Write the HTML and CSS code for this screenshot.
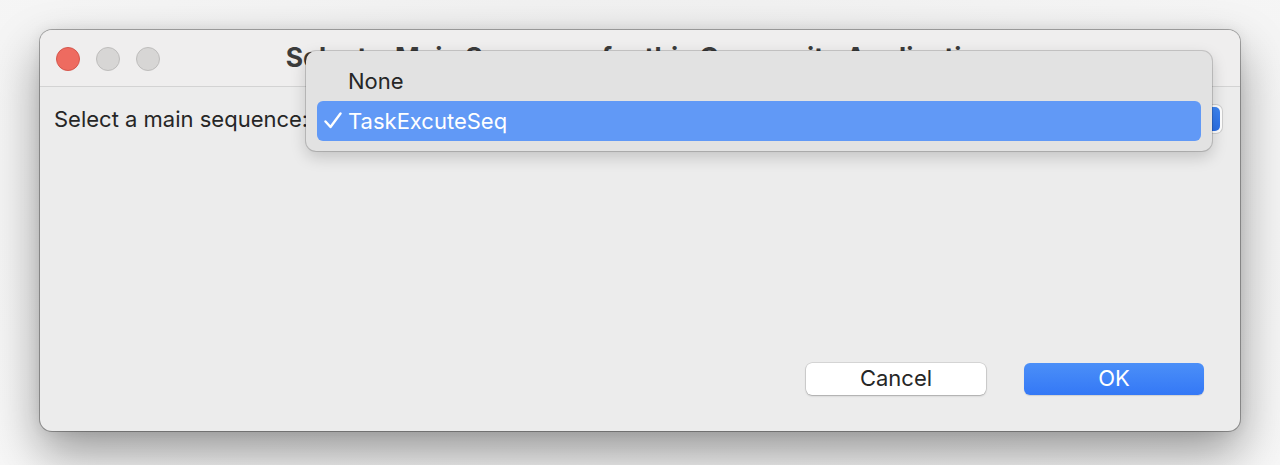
FILE: index.html
```html
<!DOCTYPE html>
<html>
<head>
<meta charset="utf-8">
<link rel="stylesheet" href="styles.css">
</head>
<body>
<div class="window">
  <div class="titlebar">
    <div class="lights">
      <span class="light red"></span>
      <span class="light gray"></span>
      <span class="light gray"></span>
    </div>
    <div class="title">Select a Main Sequence for this Composite Application</div>
  </div>
  <div class="content">
    <div class="row">
      <span class="label">Select a main sequence:</span>
      <div class="popup"><span class="popup-arrow"></span></div>
    </div>
    <div class="buttons">
      <button class="btn cancel">Cancel</button>
      <button class="btn ok">OK</button>
    </div>
  </div>
  <div class="menu">
    <div class="item">None</div>
    <div class="item selected"><svg class="check" width="18" height="17" viewBox="0 0 18 17"><path d="M1.5 9.5 L6.5 15 L16.5 1.5" fill="none" stroke="#fff" stroke-width="2.4" stroke-linecap="round" stroke-linejoin="round"/></svg>TaskExcuteSeq</div>
  </div>
</div>
</body>
</html>
```
FILE: styles.css
```css
html, body {
  margin: 0;
  padding: 0;
}
body {
  width: 1280px;
  height: 465px;
  overflow: hidden;
  background: radial-gradient(ellipse at 50% 40%, #e9e9e9 0%, #f3f3f3 60%, #f7f7f7 100%);
  font-family: Inter, "Liberation Sans", sans-serif;
  color: #262626;
  padding-top: 30px;
  padding-left: 40px;
  box-sizing: border-box;
}
.window {
  position: relative;
  width: 1200px;
  height: 401px;
  border-radius: 12px;
  background: #ececec;
  box-shadow: 0 0 0 1px rgba(0,0,0,0.3), 0 22px 48px rgba(0,0,0,0.38), 0 0 14px rgba(0,0,0,0.08);
  display: flex;
  flex-direction: column;
}
.titlebar {
  height: 56px;
  border-bottom: 1px solid #d3d3d3;
  background: #efeeee;
  border-radius: 12px 12px 0 0;
  display: flex;
  align-items: center;
  position: relative;
}
.lights {
  display: flex;
  gap: 16px;
  padding-left: 16px;
  padding-top: 2px;
}
.light {
  width: 24px;
  height: 24px;
  border-radius: 50%;
  box-sizing: border-box;
}
.red {
  background: #ee6b60;
  border: 1px solid #d5564c;
}
.gray {
  background: #d7d6d5;
  border: 1px solid #bebdbc;
}
.title {
  position: absolute;
  left: 0;
  right: 0;
  top: 11px;
  text-align: center;
  font-weight: 700;
  font-size: 26.5px;
  color: #3c3c3c;
  white-space: nowrap;
}
.content {
  flex: 1;
  display: flex;
  flex-direction: column;
  justify-content: space-between;
  padding: 13px 18px 36px 14px;
}
.row {
  display: flex;
  align-items: center;
  gap: 6px;
  height: 38px;
}
.label {
  font-size: 22px;
  white-space: nowrap;
}
.popup {
  flex: 1;
  height: 28px;
  border-radius: 6px;
  background: #fff;
  box-shadow: 0 0 0 1px rgba(0,0,0,0.12);
  display: flex;
  justify-content: flex-end;
}
.popup-arrow {
  width: 22px;
  height: 24px;
  margin: 2px;
  border-radius: 5px;
  background: linear-gradient(#3d86f5, #2a6fe6);
}
.buttons {
  display: flex;
  justify-content: flex-end;
  gap: 38px;
  padding-right: 18px;
}
.btn {
  width: 180px;
  height: 32px;
  border: none;
  border-radius: 6px;
  font-family: Inter, "Liberation Sans", sans-serif;
  font-size: 22px;
  line-height: 30px;
  padding: 0 0 2px;
}
.cancel {
  background: #fff;
  color: #262626;
  box-shadow: 0 0 0 0.5px rgba(0,0,0,0.18), 0 1px 2px rgba(0,0,0,0.22);
}
.ok {
  background: linear-gradient(#4b8ff8, #3478f6);
  color: #fff;
  box-shadow: 0 1px 1px rgba(0,0,0,0.12);
}
.menu {
  position: absolute;
  left: 266px;
  top: 21px;
  width: 906px;
  height: 100px;
  box-sizing: border-box;
  padding: 10px 11px;
  background: #e2e2e2;
  border-radius: 10px;
  box-shadow: 0 0 0 1px rgba(0,0,0,0.16), 0 6px 16px rgba(0,0,0,0.18);
}
.item {
  height: 40px;
  display: flex;
  align-items: center;
  padding-left: 31px;
  font-size: 22px;
  color: #262626;
  position: relative;
  border-radius: 6px;
}
.item.selected {
  background: #6199f6;
  color: #fff;
}
.check {
  position: absolute;
  left: 7px;
  top: 11px;
}
```
